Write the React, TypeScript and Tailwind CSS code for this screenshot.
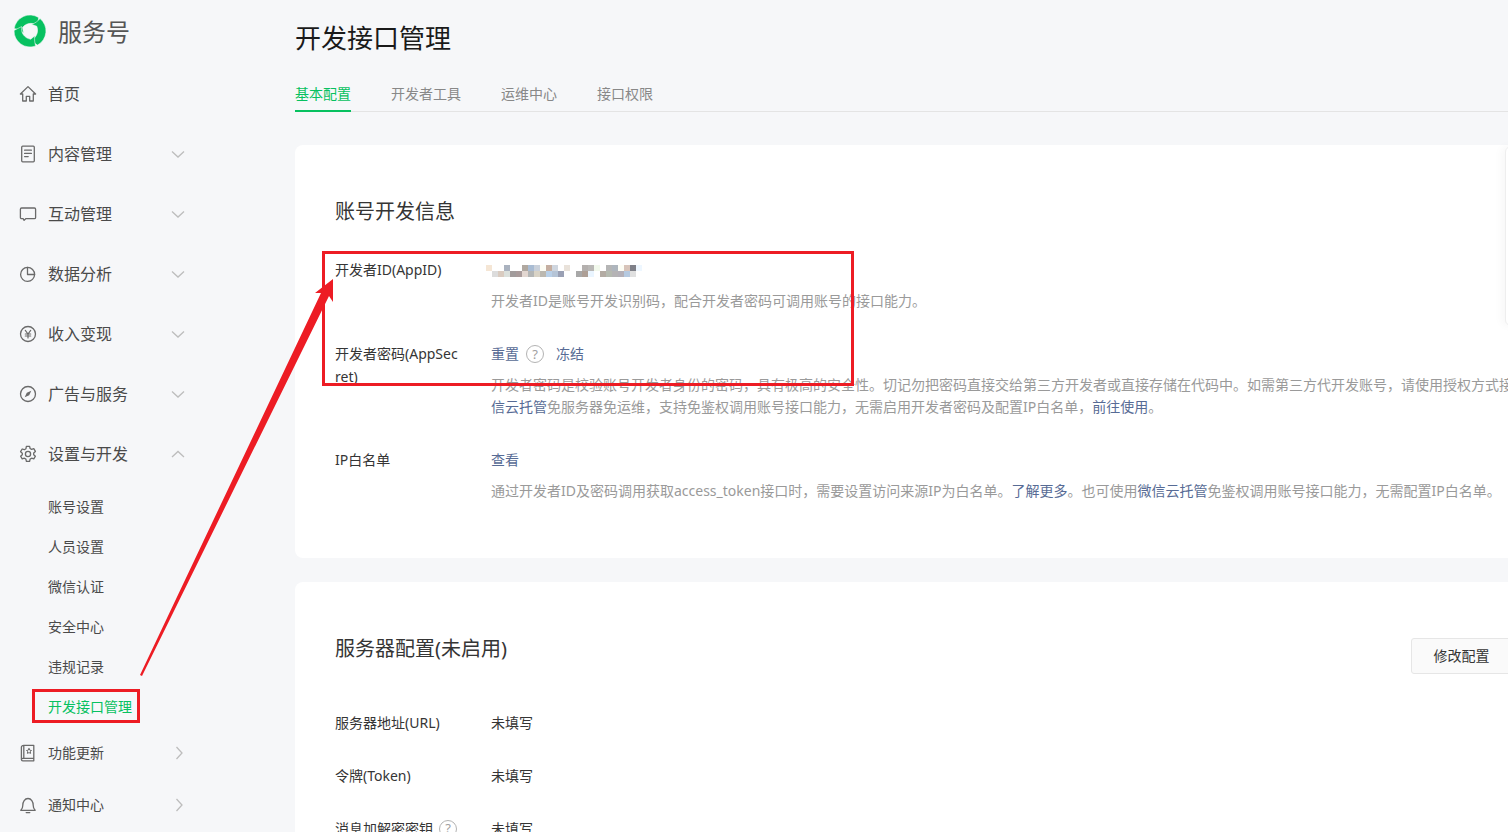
import { ReactNode } from "react";

const ink = "#6a6a6a";

function Ico({ children }: { children: ReactNode }) {
  return (
    <svg width="18" height="18" viewBox="0 0 18 18" fill="none" stroke={ink} strokeWidth="1.3" strokeLinejoin="round" strokeLinecap="round" className="shrink-0">
      {children}
    </svg>
  );
}

const HomeIcon = () => (
  <Ico>
    <path d="M9 1.600 1.400 9h2.300v7h3.600v-4.600h3.400V16h3.600V9h2.300L9 1.600Z" />
  </Ico>
);
const DocIcon = () => (
  <Ico>
    <rect x="2.700" y="1.200" width="12.600" height="15.600" rx="1" />
    <path d="M5.600 5.200h6.800M5.600 8.400h6.800M5.600 11.600h3.600" />
  </Ico>
);
const ChatIcon = () => (
  <Ico>
    <path d="M2.600 3h12.800c.7 0 1.200.5 1.200 1.200v8.200c0 .7-.5 1.200-1.200 1.200H7l-1.900 1.700-1-1.700H2.600c-.7 0-1.200-.5-1.200-1.200V4.200C1.400 3.500 1.900 3 2.600 3Z" />
  </Ico>
);
const PieIcon = () => (
  <Ico>
    <path d="M8.500 2.400a7 7 0 1 0 7.100 7.100H8.500V2.400Z" />
    <path d="M8.500 2.400a7 7 0 0 1 7.100 7.100" />
  </Ico>
);
const YenIcon = () => (
  <Ico>
    <circle cx="9" cy="9" r="7.500" />
    <path d="M6.300 5.400 9 9l2.700-3.600M6.300 9h5.400M6.300 11h5.400M9 9v4" strokeWidth="1.200" />
  </Ico>
);
const CompassIcon = () => (
  <Ico>
    <circle cx="9" cy="9" r="7.500" />
    <path d="M12.300 5.700 10.200 10.200 5.700 12.300 7.800 7.800Z" fill={ink} stroke="none" />
  </Ico>
);
const GearIcon = () => (
  <Ico>
    <path d="M7.400 1.300h3.200l.5 2.200 1.500.9 2.200-.7 1.600 2.700-1.700 1.500v1.800l1.700 1.500-1.600 2.700-2.200-.7-1.500.9-.5 2.200H7.400l-.5-2.200-1.500-.9-2.200.7-1.600-2.700 1.700-1.500V8.200L1.600 6.700l1.600-2.700 2.200.7 1.500-.9.5-2.500Z" />
    <circle cx="9" cy="9" r="2.600" />
  </Ico>
);
const BookIcon = () => (
  <Ico>
    <path d="M4.800 1.400h10v13h-11c-.9 0-1.400.5-1.400 1.200s.5 1.200 1.400 1.200h11V14.400M2.400 15.600V3.200c0-1 .8-1.800 2.400-1.800v13" />
    <path d="m10 4.700.8 1.500 1.700.3-1.200 1.200.3 1.700-1.600-.8-1.600.8.300-1.700-1.200-1.200 1.700-.3.8-1.500Z" strokeWidth="1" />
  </Ico>
);
const BellIcon = () => (
  <Ico>
    <path d="M1.800 14.300h14.400c-1.500-1.200-2-2.600-2-5 0-3.500-1.900-6.800-5.200-6.800S3.800 5.800 3.800 9.300c0 2.400-.5 3.800-2 5Z" />
    <path d="M7.200 16.600h3.600" />
  </Ico>
);

function Chevron({ dir }: { dir: "down" | "up" | "right" }) {
  const d = dir === "down" ? "M1 1.500 7 7l6-5.500" : dir === "up" ? "M1 7 7 1.500 13 7" : "M1.500 1 7 7l-5.500 6";
  const box = dir === "right" ? "0 0 9 14" : "0 0 14 8.500";
  return (
    <svg width={dir === "right" ? 9 : 14} height={dir === "right" ? 14 : 8.5} viewBox={box} fill="none" stroke="#bdbdbd" strokeWidth="1.300">
      <path d={d} />
    </svg>
  );
}

function Logo() {
  const swoosh = "M.2 13.500A16 16 0 0 1 24.500 2.500L24 11C20 7.500 13 7 8.500 12.500L9.500 18C7 15.500 3 14 .2 13.500Z";
  return (
    <svg width="32" height="32" viewBox="0 0 32 32" fill="#07c160" stroke="#f6f7f9" strokeWidth=".5" className="shrink-0">
      <path d={swoosh} />
      <path d={swoosh} transform="rotate(120 16 16)" />
      <path d={swoosh} transform="rotate(240 16 16)" />
    </svg>
  );
}

function Help() {
  return (
    <span className="inline-flex h-[18px] w-[18px] shrink-0 items-center justify-center rounded-full border border-[#b3b3b3] text-[13px] text-[#a0a0a0]">?</span>
  );
}

const mainNav = [
  { label: "首页", icon: <HomeIcon />, chevron: false },
  { label: "内容管理", icon: <DocIcon />, chevron: true },
  { label: "互动管理", icon: <ChatIcon />, chevron: true },
  { label: "数据分析", icon: <PieIcon />, chevron: true },
  { label: "收入变现", icon: <YenIcon />, chevron: true },
  { label: "广告与服务", icon: <CompassIcon />, chevron: true },
];

const subNav = ["账号设置", "人员设置", "微信认证", "安全中心", "违规记录"];

function Sidebar() {
  return (
    <aside className="w-[295px] shrink-0">
      <div className="flex h-16 items-start gap-3 pl-3.5 pt-[15px]">
        <Logo />
        <span className="text-2xl leading-[34px] text-[#555]">服务号</span>
      </div>
      {mainNav.map((item) => (
        <div key={item.label} className="flex h-[60px] items-center pl-[19px]">
          {item.icon}
          <span className="ml-[11px] w-[123px] text-base text-[#4a4a4a]">{item.label}</span>
          {item.chevron && <Chevron dir="down" />}
        </div>
      ))}
      <div className="flex h-[60px] items-center pl-[19px]">
        <GearIcon />
        <span className="ml-[11px] w-[123px] text-base text-[#4a4a4a]">设置与开发</span>
        <Chevron dir="up" />
      </div>
      <div className="mt-[3px]">
        {subNav.map((s) => (
          <div key={s} className="flex h-10 items-center pl-12 text-sm text-[#4a4a4a]">{s}</div>
        ))}
        <div className="flex h-10 items-center pl-12 text-sm text-[#07c160]">开发接口管理</div>
      </div>
      <div className="flex h-[52px] items-center pl-[19px]">
        <BookIcon />
        <span className="ml-[11px] w-[127px] text-sm text-[#4a4a4a]">功能更新</span>
        <Chevron dir="right" />
      </div>
      <div className="flex h-[52px] items-center pl-[19px]">
        <BellIcon />
        <span className="ml-[11px] w-[127px] text-sm text-[#4a4a4a]">通知中心</span>
        <Chevron dir="right" />
      </div>
    </aside>
  );
}

function Row({ label, children }: { label: ReactNode; children: ReactNode }) {
  return (
    <div className="flex pb-[31px]">
      <div className="-mt-px mr-[30px] w-[126px] shrink-0 break-all text-sm leading-[23px] text-[#353535]">{label}</div>
      <div className="min-w-0 flex-1 text-sm leading-[22px] text-[#353535]">{children}</div>
    </div>
  );
}

function Desc({ children }: { children: ReactNode }) {
  return <p className="mt-[9px] text-sm leading-[22px] text-[#9a9a9a]">{children}</p>;
}

function A({ children }: { children: ReactNode }) {
  return <span className="text-[#576b95]">{children}</span>;
}

const mosaic: [number, number, string][] = [
  [0, 0, "#f5e6d5"], [3, 0, "#aab2bf"], [6, 0, "#b0a8a0"], [7, 0, "#a9bcd3"], [8, 0, "#c9d0da"], [9, 0, "#fdfdf5"], [10, 0, "#c5aea0"], [11, 0, "#cfd6df"], [13, 0, "#e9e2da"],
  [16, 0, "#b4b0ae"], [17, 0, "#bab8b6"], [18, 0, "#f2f9ec"], [20, 0, "#b5b5b5"], [21, 0, "#aeb5bd"], [22, 0, "#fdfdf5"], [23, 0, "#d8c4ba"], [24, 0, "#7f8088"], [25, 0, "#eef7ff"],
  [1, 1, "#dcdcdc"], [2, 1, "#d9cbc0"], [3, 1, "#dbe0dc"], [4, 1, "#a29c9c"], [5, 1, "#a99b9b"], [6, 1, "#e3d7d1"], [7, 1, "#b4b6b6"], [8, 1, "#d9d3c6"], [9, 1, "#bcb8b0"], [10, 1, "#b9d0e8"], [11, 1, "#b5c4d6"], [12, 1, "#9aa0b4"],
  [15, 1, "#a8a8a8"], [16, 1, "#ad9f96"], [17, 1, "#eaf5ff"], [19, 1, "#b3aba3"], [20, 1, "#b5bab0"], [21, 1, "#b5b3b5"], [22, 1, "#b4b0b8"], [23, 1, "#b5c9e0"], [24, 1, "#e0e0e0"],
];

function Mosaic() {
  return (
    <svg width="156" height="12" viewBox="0 0 156 12" className="-ml-[5px] block" shapeRendering="crispEdges">
      {mosaic.map(([x, y, c]) => (
        <rect key={`${x}-${y}`} x={x * 6} y={y * 6} width="6" height="6" fill={c} />
      ))}
    </svg>
  );
}

function Main() {
  return (
    <main className="w-[1365px] shrink-0">
      <h1 className="pt-5 text-[26px] font-normal leading-9 text-[#1a1a1a]">开发接口管理</h1>
      <div className="mt-[27px] flex h-[29px] gap-10 border-b border-[#e4e4e4] text-sm leading-[22px] text-[#888]">
        <div className="h-[29px] border-b-2 border-[#07c160] text-[#07c160]">基本配置</div>
        <div>开发者工具</div>
        <div>运维中心</div>
        <div>接口权限</div>
      </div>

      <section className="mt-[33px] rounded-lg bg-white px-10 pb-[25px] pt-[53px]">
        <h2 className="text-xl font-normal leading-7 text-[#353535]">账号开发信息</h2>
        <div className="mt-[33px]">
          <Row label="开发者ID(AppID)">
            <div className="h-[22px] pt-[6px]"><Mosaic /></div>
            <Desc>开发者ID是账号开发识别码，配合开发者密码可调用账号的接口能力。</Desc>
          </Row>
          <Row label="开发者密码(AppSecret)">
            <div className="flex h-[22px] items-center">
              <A>重置</A>
              <span className="ml-[7px] mr-[12px]"><Help /></span>
              <A>冻结</A>
            </div>
            <Desc>
              开发者密码是校验账号开发者身份的密码，具有极高的安全性。切记勿把密码直接交给第三方开发者或直接存储在代码中。如需第三方代开发账号，请使用授权方式接入。也可使用微
              <A>信云托管</A>免服务器免运维，支持免鉴权调用账号接口能力，无需启用开发者密码及配置IP白名单，<A>前往使用</A>。
            </Desc>
          </Row>
          <Row label="IP白名单">
            <A>查看</A>
            <Desc>
              通过开发者ID及密码调用获取access_token接口时，需要设置访问来源IP为白名单。<A>了解更多</A>。也可使用<A>微信云托管</A>免鉴权调用账号接口能力，无需配置IP白名单。
            </Desc>
          </Row>
        </div>
      </section>

      <section className="mt-6 rounded-lg bg-white pb-10 pl-10 pr-[148px] pt-[53px]">
        <div className="flex items-start justify-between">
          <h2 className="text-xl font-normal leading-7 text-[#353535]">服务器配置(未启用)</h2>
          <button className="mt-[3px] h-9 w-[101px] rounded-[3px] border border-[#e6e6e6] bg-[#fafafa] text-sm text-[#353535]">修改配置</button>
        </div>
        <div className="mt-[38px]">
          <Row label="服务器地址(URL)">未填写</Row>
          <Row label="令牌(Token)">未填写</Row>
          <Row label={<span className="flex items-center gap-1.5">消息加解密密钥<Help /></span>}>未填写</Row>
        </div>
      </section>
    </main>
  );
}

export default function App() {
  return (
    <div className="relative h-[832px] w-[1508px] overflow-hidden bg-[#f6f7f9] font-['Noto_Sans','Noto_Sans_CJK_SC',sans-serif]">
      <div className="flex">
        <Sidebar />
        <Main />
      </div>

      {/* floating panel peeking in at the right edge */}
      <div className="absolute left-[1505px] top-[146px] h-[180px] w-10 rounded-l-md border border-[#eeeeee] bg-white shadow-[-4px_0_8px_rgba(0,0,0,0.03)]" />

      {/* red annotation marks drawn on top of the screenshot */}
      <div className="absolute left-[322px] top-[251px] h-[135px] w-[532px] border-[3px] border-[#ed1c24]" />
      <div className="absolute left-8 top-[689px] h-[34px] w-[108px] border-[3px] border-[#ed1c24]" />
      <svg className="absolute left-0 top-0" width="1508" height="832" fill="#ed1c24">
        <polygon points="333,279 333,302 329,296 142,676 140,675 321,293 315,293" />
      </svg>
    </div>
  );
}
